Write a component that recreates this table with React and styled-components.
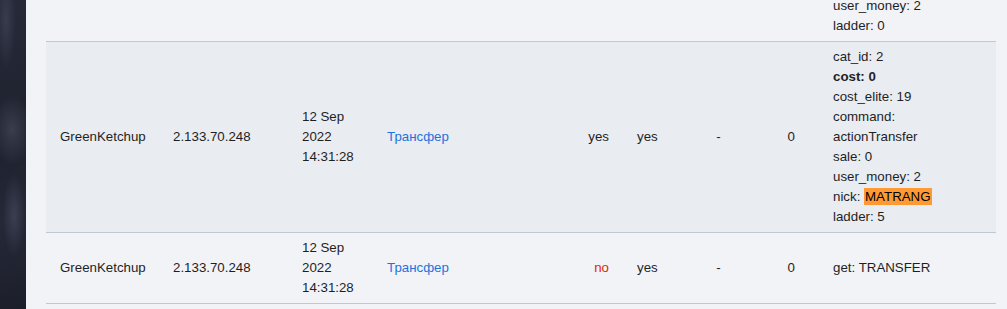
import React from "react";
import styled, { createGlobalStyle } from "styled-components";

const GlobalStyle = createGlobalStyle`
  html, body {
    margin: 0;
    padding: 0;
    height: 100%;
    overflow: hidden;
    font-family: "Liberation Sans", Arial, sans-serif;
    font-size: 13.3px;
    color: #1f1f1f;
  }
`;

const rows = [
  {
    name: "GreenKetchup",
    ip: "2.133.70.248",
    date: ["12 Sep", "2022", "14:31:28"],
    action: "Трансфер",
    ok: true,
    params: [
      ["cat_id", "1"],
      ["cost", "0", "bold"],
      ["cost_elite", "19"],
      ["command", ""],
      ["actionTransfer"],
      ["sale", "0"],
      ["user_money", "2"],
      ["ladder", "0"],
    ],
  },
  {
    name: "GreenKetchup",
    ip: "2.133.70.248",
    date: ["12 Sep", "2022", "14:31:28"],
    action: "Трансфер",
    ok: true,
    active: true,
    params: [
      ["cat_id", "2"],
      ["cost", "0", "bold"],
      ["cost_elite", "19"],
      ["command", ""],
      ["actionTransfer"],
      ["sale", "0"],
      ["user_money", "2"],
      ["nick", "MATRANG", "mark"],
      ["ladder", "5"],
    ],
  },
  {
    name: "GreenKetchup",
    ip: "2.133.70.248",
    date: ["12 Sep", "2022", "14:31:28"],
    action: "Трансфер",
    ok: false,
    params: [["get", "TRANSFER"]],
  },
  {
    name: "GreenKetchup",
    ip: "2.133.70.248",
    date: ["12 Sep", "2022", "14:31:28"],
    action: "Трансфер",
    ok: true,
    params: [["get", "TRANSFER"]],
  },
];

const Param = ({ p }) => {
  const [key, val, kind] = p;
  if (val === undefined) return <Line>{key}</Line>;
  if (kind === "bold")
    return (
      <Line>
        <b>
          {key}: {val}
        </b>
      </Line>
    );
  if (kind === "mark")
    return (
      <Line>
        {key}: <Mark>{val}</Mark>
      </Line>
    );
  return (
    <Line>
      {key}:{val ? ` ${val}` : ""}
    </Line>
  );
};

const App = () => {
  return (
    <Page>
      <GlobalStyle />
      <Backdrop />
      <Main>
        <Scroller>
          <Table>
            <colgroup>
              <col style={{ width: 113 }} />
              <col style={{ width: 129 }} />
              <col style={{ width: 85 }} />
              <col style={{ width: 167 }} />
              <col style={{ width: 83 }} />
              <col style={{ width: 67 }} />
              <col style={{ width: 57 }} />
              <col style={{ width: 72 }} />
              <col />
            </colgroup>
            <tbody>
              {rows.map((r, i) => (
                <Row key={i} $active={r.active} $first={i === 0}>
                  <Cell>{r.name}</Cell>
                  <Cell>{r.ip}</Cell>
                  <Cell>
                    {r.date.map((d) => (
                      <Line key={d}>{d}</Line>
                    ))}
                  </Cell>
                  <Cell>
                    <Link href="#">{r.action}</Link>
                  </Cell>
                  <Cell $align="right">
                    <Status $ok={r.ok}>{r.ok ? "yes" : "no"}</Status>
                  </Cell>
                  <Cell>yes</Cell>
                  <Cell $align="center">-</Cell>
                  <Cell $align="right" $padRight={24}>
                    0
                  </Cell>
                  <Cell>
                    {r.params.map((p, j) => (
                      <Param key={j} p={p} />
                    ))}
                  </Cell>
                </Row>
              ))}
            </tbody>
          </Table>
        </Scroller>
      </Main>
    </Page>
  );
};

const Page = styled.div`
  display: flex;
  width: 1007px;
  height: 309px;
  overflow: hidden;
  background: #f1f3f7;
`;

const Backdrop = styled.div`
  flex: 0 0 26px;
  background:
    radial-gradient(ellipse 14px 70px at 6px 20px, rgba(90, 96, 120, 0.35), transparent 70%),
    radial-gradient(ellipse 30px 50px at 12px 130px, rgba(120, 126, 150, 0.3), transparent 70%),
    radial-gradient(ellipse 16px 60px at 14px 215px, rgba(110, 115, 140, 0.3), transparent 70%),
    linear-gradient(160deg, #272a39 0%, #1e212d 45%, #252837 70%, #1c1f2a 100%);
`;

const Main = styled.div`
  flex: 1;
  padding: 0 11px 0 20px;
  background: #f1f3f7;
  overflow: hidden;
`;

const Scroller = styled.div`
  margin-top: -129px;
`;

const Table = styled.table`
  width: 950px;
  border-collapse: collapse;
  table-layout: fixed;
`;

const Row = styled.tr`
  background: ${(p) => (p.$active ? "#e9ecf1" : "transparent")};
  & > td {
    border-top: ${(p) => (p.$first ? "none" : "1px solid #bfc8d6")};
  }
`;

const Cell = styled.td`
  padding: 5px ${(p) => p.$padRight || 14}px 5px 14px;
  vertical-align: middle;
  text-align: ${(p) => p.$align || "left"};
  line-height: 20px;
  white-space: nowrap;
`;

const Line = styled.div`
  line-height: 20px;
`;

const Link = styled.a`
  color: #1f72de;
  text-decoration: none;
`;

const Status = styled.span`
  color: ${(p) => (p.$ok ? "#1f1f1f" : "#e3260e")};
`;

const Mark = styled.span`
  background: #ff9933;
  color: #000;
  padding: 1px 1px;
`;

export default App;
